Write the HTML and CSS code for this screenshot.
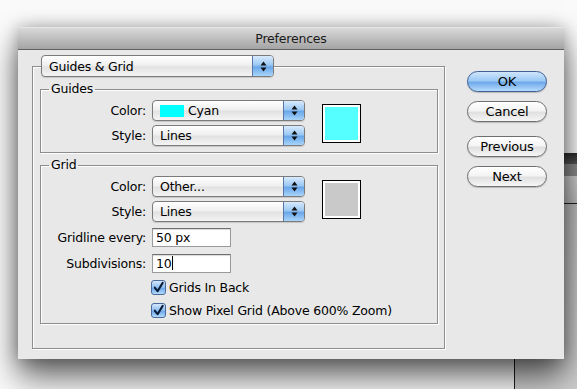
FILE: index.html
```html
<!DOCTYPE html>
<html lang="en">
<head>
    <meta charset="UTF-8">
    <meta name="viewport" content="width=device-width, initial-scale=1.0">
    <title>Preferences</title>
    <link rel="stylesheet" href="styles.css">
</head>
<body>

    <!-- Window of another app, sitting behind the dialog -->
    <div class="backdrop-window">
        <div class="backdrop-bar"></div>
        <div class="backdrop-tools"></div>
        <div class="backdrop-head"></div>
    </div>

    <div class="window">
        <div class="titlebar">Preferences</div>

        <div class="window-body">
            <fieldset class="panel">
                <legend class="popup popup-main">
                    <span class="popup-text">Guides &amp; Grid</span>
                    <span class="popup-arrows">
                        <svg width="7" height="11" viewBox="0 0 7 11"><path d="M3.5 0.5 L6.5 4.5 L0.5 4.5 Z M0.5 6.5 L6.5 6.5 L3.5 10.5 Z" fill="#111"/></svg>
                    </span>
                </legend>

                <!-- Guides -->
                <fieldset class="group">
                    <legend class="group-title">Guides</legend>
                    <div class="pair">
                        <div class="rows">
                            <div class="row">
                                <label class="row-label">Color:</label>
                                <div class="popup">
                                    <span class="popup-text"><span class="chip"></span>Cyan</span>
                                    <span class="popup-arrows">
                                        <svg width="7" height="11" viewBox="0 0 7 11"><path d="M3.5 0.5 L6.5 4.5 L0.5 4.5 Z M0.5 6.5 L6.5 6.5 L3.5 10.5 Z" fill="#111"/></svg>
                                    </span>
                                </div>
                            </div>
                            <div class="row">
                                <label class="row-label">Style:</label>
                                <div class="popup">
                                    <span class="popup-text">Lines</span>
                                    <span class="popup-arrows">
                                        <svg width="7" height="11" viewBox="0 0 7 11"><path d="M3.5 0.5 L6.5 4.5 L0.5 4.5 Z M0.5 6.5 L6.5 6.5 L3.5 10.5 Z" fill="#111"/></svg>
                                    </span>
                                </div>
                            </div>
                        </div>
                        <div class="well"><div class="well-fill cyan"></div></div>
                    </div>
                </fieldset>

                <!-- Grid -->
                <fieldset class="group">
                    <legend class="group-title">Grid</legend>
                    <div class="pair">
                        <div class="rows">
                            <div class="row">
                                <label class="row-label">Color:</label>
                                <div class="popup">
                                    <span class="popup-text">Other...</span>
                                    <span class="popup-arrows">
                                        <svg width="7" height="11" viewBox="0 0 7 11"><path d="M3.5 0.5 L6.5 4.5 L0.5 4.5 Z M0.5 6.5 L6.5 6.5 L3.5 10.5 Z" fill="#111"/></svg>
                                    </span>
                                </div>
                            </div>
                            <div class="row">
                                <label class="row-label">Style:</label>
                                <div class="popup">
                                    <span class="popup-text">Lines</span>
                                    <span class="popup-arrows">
                                        <svg width="7" height="11" viewBox="0 0 7 11"><path d="M3.5 0.5 L6.5 4.5 L0.5 4.5 Z M0.5 6.5 L6.5 6.5 L3.5 10.5 Z" fill="#111"/></svg>
                                    </span>
                                </div>
                            </div>
                        </div>
                        <div class="well"><div class="well-fill gray"></div></div>
                    </div>

                    <div class="row row-field">
                        <label class="row-label">Gridline every:</label>
                        <div class="field">50 px</div>
                    </div>
                    <div class="row row-field second">
                        <label class="row-label">Subdivisions:</label>
                        <div class="field">10<span class="caret"></span></div>
                    </div>

                    <div class="check-row">
                        <span class="checkbox">
                            <svg width="14" height="14" viewBox="0 0 14 14"><path d="M3 6.5 L6 10.5 L11.5 1.5" fill="none" stroke="#0b1a33" stroke-width="2.2" stroke-linecap="round" stroke-linejoin="round"/></svg>
                        </span>
                        Grids In Back
                    </div>
                    <div class="check-row">
                        <span class="checkbox">
                            <svg width="14" height="14" viewBox="0 0 14 14"><path d="M3 6.5 L6 10.5 L11.5 1.5" fill="none" stroke="#0b1a33" stroke-width="2.2" stroke-linecap="round" stroke-linejoin="round"/></svg>
                        </span>
                        Show Pixel Grid (Above 600% Zoom)
                    </div>
                </fieldset>
            </fieldset>

            <div class="buttons">
                <button class="btn btn-default">OK</button>
                <button class="btn">Cancel</button>
                <button class="btn btn-gap">Previous</button>
                <button class="btn">Next</button>
            </div>
        </div>
    </div>

</body>
</html>
```

FILE: styles.css
```css
* {
    margin: 0;
    padding: 0;
    box-sizing: border-box;
}

html {
    overflow: hidden;
}

body {
    width: 577px;
    height: 389px;
    overflow: hidden;
    position: relative;
    background: #fafafa;
    font-family: "Lucida Grande", "DejaVu Sans", sans-serif;
    font-size: 12.5px;
    letter-spacing: -0.2px;
    color: #000;
    padding: 27px 0 0 18px;
}

/* the other window peeking out on the right */
.backdrop-window {
    position: absolute;
    left: 514px;
    top: 153px;
    width: 63px;
    height: 236px;
    background: linear-gradient(#b9b9b9, #cfcfcf);
    border-left: 1px solid #1a1a1a;
}

.backdrop-bar {
    height: 11px;
    background: linear-gradient(#2c2c2c, #555);
}

.backdrop-tools {
    height: 12px;
    background: #8a8a8a;
}

.backdrop-head {
    height: 28px;
    background: linear-gradient(#d0d0d0, #bdbdbd);
    border-bottom: 1px solid #222;
}

/* dialog */
.window {
    position: relative;
    width: 546px;
    height: 332px;
    background: #e8e8e8;
    box-shadow: 0 18px 30px rgba(0, 0, 0, 0.6), 0 0 16px rgba(0, 0, 0, 0.28);
}

.titlebar {
    height: 23px;
    line-height: 22px;
    text-align: center;
    color: #1a1a1a;
    background: linear-gradient(#d9d9d9, #a4a4a4);
    border-top: 1px solid #e6e6e6;
    border-bottom: 1px solid #606060;
}

.window-body {
    display: flex;
    padding: 5px 17px 0 14px;
}

/* outer panel with the category popup */
.panel {
    width: 413px;
    border: 1px solid #8d8d8d;
    box-shadow: inset 1px 1px 0 #fff, 1px 1px 0 #fff;
    padding: 4px 6px 24px 7px;
    min-width: 0;
}

.panel > legend {
    margin-left: 1px;
}

.popup {
    display: flex;
    align-items: stretch;
    width: 153px;
    height: 21px;
    border: 1px solid #7b7b7b;
    border-radius: 4px;
    background: linear-gradient(#ffffff, #f0f0f0 45%, #e2e2e2 55%, #f4f4f4);
    box-shadow: 0 1px 1px rgba(0, 0, 0, 0.15);
}

.popup-main {
    width: 233px;
    height: 22px;
}

.popup-text {
    flex: 1;
    display: flex;
    align-items: center;
    padding-left: 7px;
    white-space: nowrap;
}

.popup-arrows {
    width: 21px;
    display: flex;
    align-items: center;
    justify-content: center;
    border-left: 1px solid #5877a8;
    border-radius: 0 3px 3px 0;
    background: linear-gradient(#d8ebfc, #9cc8f4 45%, #6aa7ea 55%, #a8d4fa);
}

.chip {
    width: 24px;
    height: 12px;
    background: #00ffff;
    margin-right: 4px;
}

/* group boxes */
.group {
    width: 398px;
    border: 1px solid #8d8d8d;
    box-shadow: inset 1px 1px 0 #fff, 1px 1px 0 #fff;
    padding: 3px 6px 6px 8px;
    min-width: 0;
}

.group + .group {
    margin-top: 4px;
    padding-bottom: 3px;
}

.group-title {
    padding: 0 2px;
    line-height: 16px;
}

.pair {
    display: flex;
    align-items: center;
    gap: 17px;
}

.rows {
    display: flex;
    flex-direction: column;
    gap: 4px;
}

.row {
    display: flex;
    align-items: center;
    gap: 6px;
}

.row-label {
    width: 97px;
    text-align: right;
    white-space: nowrap;
}

.well {
    width: 39px;
    height: 39px;
    border: 1px solid #000;
    background: #fff;
    padding: 2px;
}

.well-fill {
    height: 100%;
}

.cyan {
    background: #55ffff;
}

.gray {
    background: #c9c9c9;
}

.row-field {
    margin-top: 6px;
}

.row-field.second {
    margin-top: 7px;
}

.field {
    width: 79px;
    height: 19px;
    line-height: 17px;
    padding-left: 3px;
    background: #fff;
    border: 1px solid #9a9a9a;
    border-top-color: #6e6e6e;
    box-shadow: inset 0 1px 1px rgba(0, 0, 0, 0.15);
}

.caret {
    display: inline-block;
    width: 1px;
    height: 14px;
    background: #000;
    vertical-align: -2px;
}

.check-row {
    display: flex;
    align-items: center;
    gap: 3px;
    height: 20px;
    margin-left: 102px;
    margin-top: 4px;
    white-space: nowrap;
}

.check-row + .check-row {
    margin-top: 3px;
}

.checkbox {
    width: 15px;
    height: 15px;
    display: flex;
    border: 1px solid #4a6a9c;
    border-radius: 3px;
    background: linear-gradient(#d4e8fc, #8cbdf0 50%, #6aa6ea 55%, #b4dcfc);
}

/* buttons */
.buttons {
    display: flex;
    flex-direction: column;
    gap: 9px;
    margin-left: 22px;
    padding-top: 16px;
}

.btn {
    width: 80px;
    height: 21px;
    border: 1px solid #6f6f6f;
    border-radius: 11px;
    font-family: inherit;
    font-size: 13px;
    letter-spacing: -0.2px;
    color: #000;
    background: linear-gradient(#ffffff, #f4f4f4 45%, #e0e0e0 55%, #f6f6f6);
    box-shadow: 0 1px 1px rgba(0, 0, 0, 0.2);
}

.btn-default {
    border-color: #3f5f95;
    background: linear-gradient(#cfe5fb, #9ccaf5 45%, #6fa9ea 55%, #b5dcfc);
}

.btn-gap {
    margin-top: 5px;
}
```
